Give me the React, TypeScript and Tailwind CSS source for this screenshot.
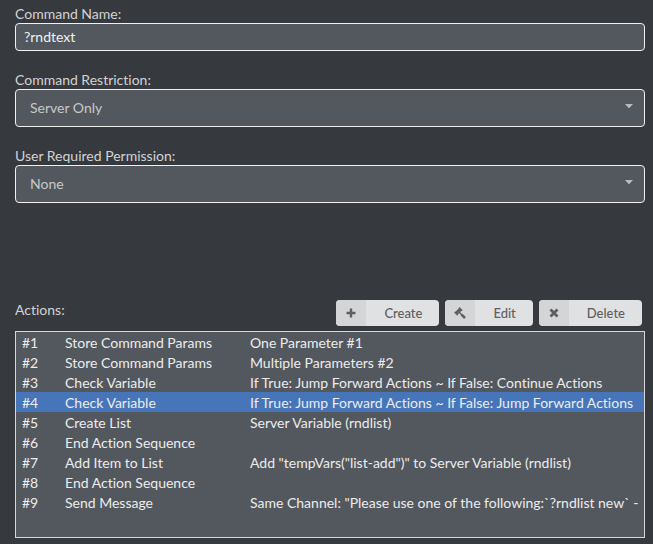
const rows = [
  ['#1', 'Store Command Params', 'One Parameter #1'],
  ['#2', 'Store Command Params', 'Multiple Parameters #2'],
  ['#3', 'Check Variable', 'If True: Jump Forward Actions ~ If False: Continue Actions'],
  ['#4', 'Check Variable', 'If True: Jump Forward Actions ~ If False: Jump Forward Actions'],
  ['#5', 'Create List', 'Server Variable (rndlist)'],
  ['#6', 'End Action Sequence', ''],
  ['#7', 'Add Item to List', 'Add "tempVars("list-add")" to Server Variable (rndlist)'],
  ['#8', 'End Action Sequence', ''],
  ['#9', 'Send Message', 'Same Channel: "Please use one of the following:`?rndlist new` -'],
];

const buttons = [
  { label: 'Create', path: 'M6 1.5V10.5M1.5 6H10.5', width: 2.4 },
  { label: 'Edit', path: 'M7.6 7.6L11 11', width: 2.6 },
  { label: 'Delete', path: 'M2.5 2.5L9.5 9.5M9.5 2.5L2.5 9.5', width: 2.8 },
];

function SelectField({ id, label, value }: { id: string; label: string; value: string }) {
  return (
    <div>
      <label htmlFor={id} className="block h-[19px]">{label}</label>
      <div className="relative">
        <select id={id} className="block h-[38px] w-full appearance-none rounded border border-[#f0f0f0] bg-[#53585f] px-3.5 text-[#c6c8ca]">
          <option>{value}</option>
        </select>
        <svg viewBox="0 0 8 4" className="pointer-events-none absolute top-[15px] right-3 h-1 w-2 fill-[#b9babc]" aria-hidden="true">
          <path d="M0 0H8L4.6 3.7Q4 4.3 3.4 3.7Z" />
        </svg>
      </div>
    </div>
  );
}

export default function App() {
  return (
    <main className="min-h-screen bg-[#36393e] px-[15px] pt-1 pr-2 pb-1.5 font-['Lato',sans-serif] text-[14px] leading-5 text-[#d2d3d4] [font-variant-ligatures:none]">
      <label htmlFor="name" className="block h-[19px]">Command Name:</label>
      <input id="name" defaultValue="?rndtext" className="mb-[19px] block h-7 w-full rounded border border-[#f0f0f0] bg-[#53585f] px-2 pb-0.5 text-[#f0f0f0]" />
      <div className="flex flex-col gap-[19px]">
        <SelectField id="restriction" label="Command Restriction:" value="Server Only" />
        <SelectField id="permission" label="User Required Permission:" value="None" />
      </div>
      <div className="mt-[97px] flex items-start justify-between pr-[3px]">
        <span>Actions:</span>
        <div className="flex gap-1.5">
          {buttons.map(({ label, path, width }) => (
            <button key={label} type="button" className="flex h-[26px] overflow-hidden rounded bg-[#e0e1e2] text-[13px] font-medium text-[#5e5f60]">
              <span className="flex h-full w-[30px] items-center justify-center bg-[#d4d5d6]">
                <svg viewBox="0 0 12 12" className="size-3 fill-none stroke-current" strokeWidth={width} aria-hidden="true">
                  <path d={path} />
                  {label === 'Edit' && (
                    <>
                      <path d="M2.4 6.2L6.2 2.4" strokeWidth="3.6" />
                      <path d="M5 0.6L8.2 3.8M0.6 5L3.8 8.2M5 5L8 8" strokeWidth="1.5" />
                    </>
                  )}
                </svg>
              </span>
              <span className="pr-[17px] pl-[18px] leading-[26px]">{label}</span>
            </button>
          ))}
        </div>
      </div>
      <div className="mt-[5px] h-[207px] overflow-hidden border border-[#d6d7d8] bg-[#53585f]">
        <table className="w-full table-fixed border-collapse leading-[18px] text-[#ececec]">
          <tbody>
            {rows.map(([n, name, detail]) => (
              <tr key={n} className={n === '#4' ? 'h-5 bg-[#4676b9]' : 'h-5'}>
                <td className="w-[49px] p-0 pt-0.5 pl-1.5">{n}</td>
                <td className="w-[185px] p-0 pt-0.5">{name}</td>
                <td className="overflow-hidden p-0 pt-0.5 whitespace-nowrap">{detail}</td>
              </tr>
            ))}
          </tbody>
        </table>
      </div>
    </main>
  );
}
